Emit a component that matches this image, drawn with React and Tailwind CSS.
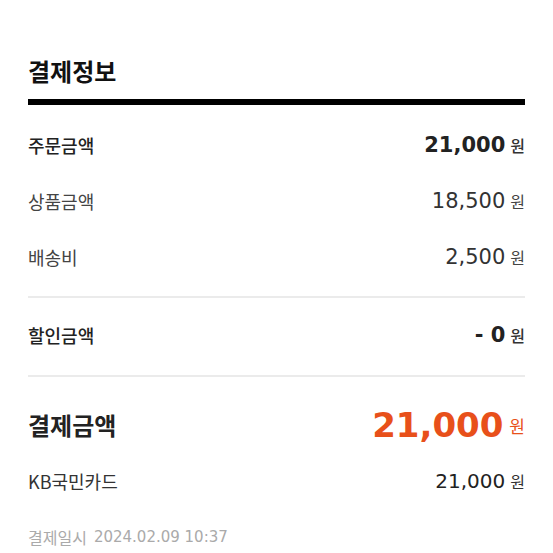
import React from "react";

const kr = { fontFamily: '"Noto Sans CJK KR", "Noto Sans", sans-serif' };
const num = { fontFamily: '"DejaVu Sans", "Noto Sans CJK KR", sans-serif' };

function Row({ label, value, labelCls, valueCls, wonCls }) {
  return (
    <div className="flex h-14 items-center justify-between">
      <span className={labelCls} style={kr}>{label}</span>
      <span className="flex items-center">
        <span className={valueCls} style={num}>{value}</span>
        <span className={wonCls} style={kr}>원</span>
      </span>
    </div>
  );
}

export default function App() {
  return (
    <div className="w-[553px] h-[553px] overflow-hidden bg-white px-[28px] pt-[52px]">
      <h1 className="text-[24px] leading-[38px] font-bold text-[#111]" style={kr}>결제정보</h1>
      <div className="mt-[9px] h-[6px] bg-black" />
      <div className="pt-3 pb-[11px]">
        <Row label="주문금액" value="21,000" labelCls="text-[18px] font-medium text-[#222]" valueCls="text-[21px] font-bold text-[#222] leading-none" wonCls="ml-[5px] text-[16px] font-medium text-[#333]" />
        <Row label="상품금액" value="18,500" labelCls="text-[18px] text-[#444]" valueCls="text-[21px] text-[#333] leading-none" wonCls="ml-[5px] text-[16px] text-[#444]" />
        <Row label="배송비" value="2,500" labelCls="text-[18px] text-[#444]" valueCls="text-[21px] text-[#333] leading-none" wonCls="ml-[5px] text-[16px] text-[#444]" />
      </div>
      <div className="h-[2px] bg-[#ebebeb]" />
      <div className="pt-[9px] pb-[12px]">
        <Row label="할인금액" value="- 0" labelCls="text-[18px] font-medium text-[#222]" valueCls="text-[21px] font-bold text-[#222] leading-none" wonCls="ml-[5px] text-[16px] font-medium text-[#333]" />
      </div>
      <div className="h-[2px] bg-[#ebebeb]" />
      <div className="pt-[20px]">
        <Row label="결제금액" value="21,000" labelCls="text-[24px] font-bold text-[#222]" valueCls="text-[34px] font-bold text-[#e8501a] leading-none" wonCls="ml-[6px] mt-[2px] text-[17px] text-[#e8501a]" />
        <Row label="KB국민카드" value="21,000" labelCls="text-[18px] text-[#333]" valueCls="text-[20px] text-[#222] leading-none" wonCls="ml-[5px] text-[16px] text-[#333]" />
        <div className="flex h-14 items-center text-[#aaaaaa]">
          <span className="text-[16px]" style={kr}>결제일시</span>
          <span className="ml-[7px] text-[15px]" style={num}>2024.02.09 10:37</span>
        </div>
      </div>
    </div>
  );
}
